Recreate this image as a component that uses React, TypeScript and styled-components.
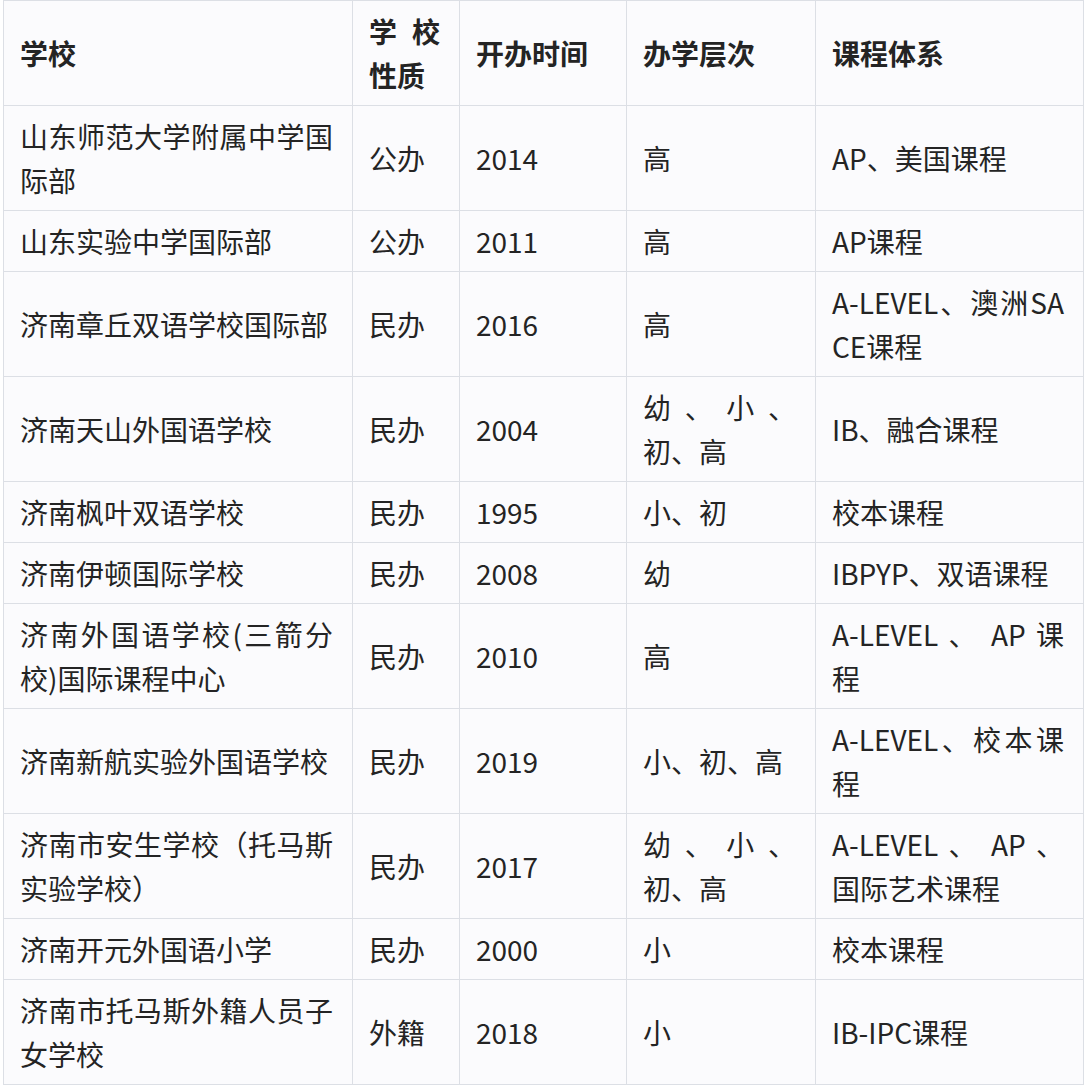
import React from "react";
import styled, { createGlobalStyle } from "styled-components";

const GlobalStyle = createGlobalStyle`
  html, body {
    margin: 0;
    padding: 0;
    background: #ffffff;
  }
  body {
    font-family: "Noto Sans CJK SC", "Noto Sans", sans-serif;
  }
`;

const Page = styled.div`
  padding: 0 3px;
`;

const Table = styled.table`
  width: 1080px;
  table-layout: fixed;
  border-collapse: collapse;
  background: #fbfbfd;
  color: #242424;
  font-size: 28px;
  line-height: 44px;
`;

const Col = styled.col<{ w: number }>`
  width: ${({ w }) => w}px;
`;

const HeadCell = styled.th`
  border: 1px solid #dcdfe5;
  padding: 8px 19px 8px 16px;
  font-weight: 700;
  text-align: left;
  vertical-align: middle;
`;

const Cell = styled.td`
  border: 1px solid #dcdfe5;
  padding: 8px 19px 8px 16px;
  font-weight: 400;
  text-align: left;
  vertical-align: middle;
`;

const Line = styled.div<{ spread?: boolean }>`
  white-space: nowrap;
  text-align: ${({ spread }) => (spread ? "justify" : "left")};
  text-align-last: ${({ spread }) => (spread ? "justify" : "auto")};
`;

type Content = string | string[];

const Lines = ({ value }: { value: Content }) => {
  const lines = Array.isArray(value) ? value : [value];
  return (
    <>
      {lines.map((l, i) => (
        <Line key={i} spread={i < lines.length - 1}>
          {l}
        </Line>
      ))}
    </>
  );
};

const widths = [349, 107, 167, 189, 268];

const header: Content[] = [
  "学校",
  ["学校", "性质"],
  "开办时间",
  "办学层次",
  "课程体系",
];

const rows: Content[][] = [
  [["山东师范大学附属中学国", "际部"], "公办", "2014", "高", "AP、美国课程"],
  ["山东实验中学国际部", "公办", "2011", "高", "AP课程"],
  ["济南章丘双语学校国际部", "民办", "2016", "高", ["A-LEVEL、澳洲SA", "CE课程"]],
  ["济南天山外国语学校", "民办", "2004", ["幼、小、", "初、高"], "IB、融合课程"],
  ["济南枫叶双语学校", "民办", "1995", "小、初", "校本课程"],
  ["济南伊顿国际学校", "民办", "2008", "幼", "IBPYP、双语课程"],
  [["济南外国语学校(三箭分", "校)国际课程中心"], "民办", "2010", "高", ["A-LEVEL 、 AP 课", "程"]],
  ["济南新航实验外国语学校", "民办", "2019", "小、初、高", ["A-LEVEL、校本课", "程"]],
  [["济南市安生学校（托马斯", "实验学校）"], "民办", "2017", ["幼、小、", "初、高"], ["A-LEVEL 、 AP 、", "国际艺术课程"]],
  ["济南开元外国语小学", "民办", "2000", "小", "校本课程"],
  [["济南市托马斯外籍人员子", "女学校"], "外籍", "2018", "小", "IB-IPC课程"],
];

export default function App() {
  return (
    <Page>
      <GlobalStyle />
      <Table>
        <colgroup>
          {widths.map((w, i) => (
            <Col key={i} w={w} />
          ))}
        </colgroup>
        <thead>
          <tr>
            {header.map((h, i) => (
              <HeadCell key={i}>
                <Lines value={h} />
              </HeadCell>
            ))}
          </tr>
        </thead>
        <tbody>
          {rows.map((r, ri) => (
            <tr key={ri}>
              {r.map((c, ci) => (
                <Cell key={ci}>
                  <Lines value={c} />
                </Cell>
              ))}
            </tr>
          ))}
        </tbody>
      </Table>
    </Page>
  );
}
